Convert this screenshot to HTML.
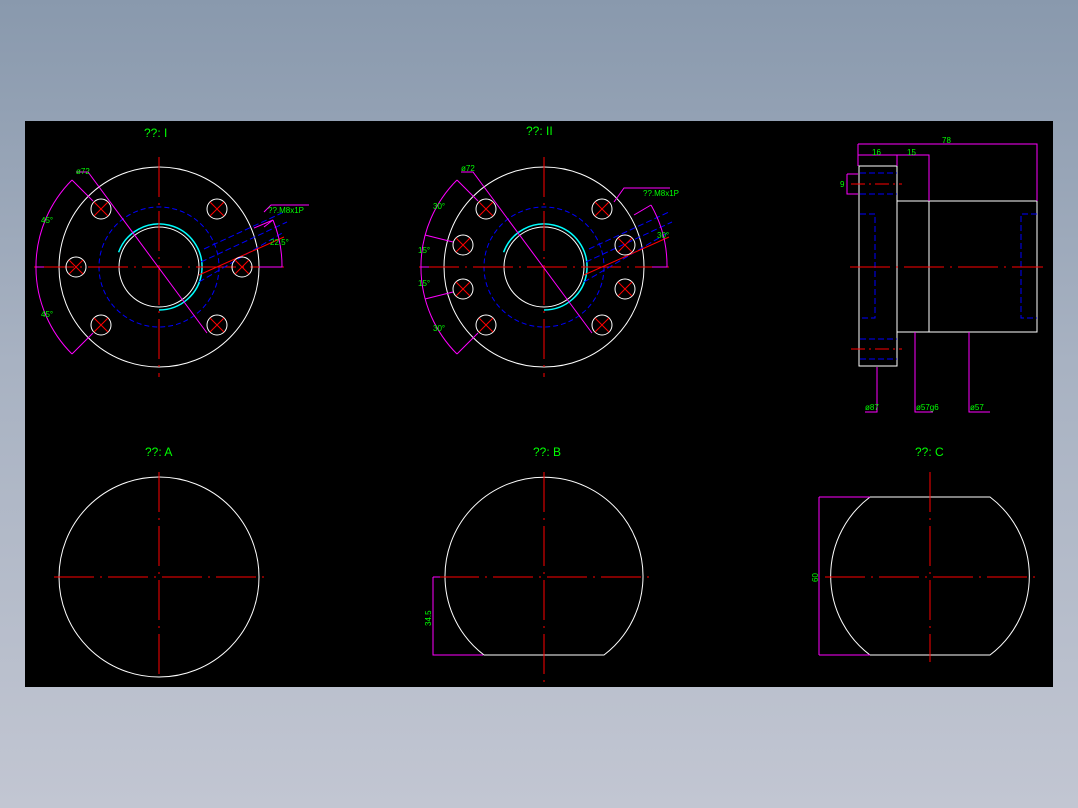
<!DOCTYPE html>
<html><head><meta charset="utf-8"><style>
html,body{margin:0;padding:0}
body{width:1078px;height:808px;background:linear-gradient(#8999ad,#a8b2c2 45%,#c2c6d2);overflow:hidden;position:relative}
svg{position:absolute;left:0;top:0}
text{font-family:"Liberation Sans",sans-serif;fill:#00ff00;font-size:8px}
.t{font-size:12px}
</style></head><body>
<svg width="1078" height="808" viewBox="0 0 1078 808" fill="none" stroke-width="1">
<rect x="25" y="121" width="1028" height="566" fill="#000"/>
<defs>
<g id="hole"><circle r="10" stroke="#fff"/><path d="M-7,-7L7,7M7,-7L-7,7" stroke="#f00"/></g>
<g id="flange">
<circle r="100" stroke="#fff"/>
<circle r="60" stroke="#00f" stroke-dasharray="5,3"/>
<circle r="40" stroke="#fff"/>
<path d="M-40.4,-14.7A43,43 0 1 1 0,43" stroke="#0ff" stroke-width="1.5"/>
<path d="M-125,0H125M0,-110V110" stroke="#f00" stroke-dasharray="40,6,2,6"/>
<path d="M45,-18L125,-55M42,-5L128,-45M40,15L125,-35" stroke="#00f" stroke-dasharray="6,3"/>
<path d="M40,8L125,-30" stroke="#f00"/>
</g>
</defs>
<!-- View I -->
<g transform="translate(159,267)">
<use href="#flange"/>
<use href="#hole" x="-83" y="0"/><use href="#hole" x="83" y="0"/>
<use href="#hole" x="-58" y="-58"/><use href="#hole" x="58" y="-58"/>
<use href="#hole" x="-58" y="58"/><use href="#hole" x="58" y="58"/>
<path d="M-66,-66L-87,-87M-87,-87A123,123 0 0 0 -87,87M-87,87L-66,66M-123,0H-115" stroke="#f0f"/>
<path d="M-83,-95H-71L48,66" stroke="#f0f"/>
<path d="M95,-39L114,-47M114,-47A123,123 0 0 1 123,0H100M114,-47L105,-40" stroke="#f0f"/>
<path d="M105,-55L112,-62H150" stroke="#f0f"/>
</g>
<text x="76" y="174">ø72</text>
<text x="41" y="223">45°</text>
<text x="41" y="317">45°</text>
<text x="268" y="213" font-size="7">??.M8x1P</text>
<text x="270" y="245">22.5°</text>
<text class="t" x="144" y="137">??: I</text>
<!-- View II -->
<g transform="translate(544,267)">
<use href="#flange"/>
<use href="#hole" x="-81" y="-22"/><use href="#hole" x="81" y="-22"/>
<use href="#hole" x="-81" y="22"/><use href="#hole" x="81" y="22"/>
<use href="#hole" x="-58" y="-58"/><use href="#hole" x="58" y="-58"/>
<use href="#hole" x="-58" y="58"/><use href="#hole" x="58" y="58"/>
<path d="M-66,-66L-87,-87M-87,-87A123,123 0 0 0 -87,87M-87,87L-66,66M-123,0H-115M-119,-32L-91,-25M-119,32L-91,25" stroke="#f0f"/>
<path d="M-83,-95H-71L48,66" stroke="#f0f"/>
<path d="M90,-52L107,-62M107,-62A123,123 0 0 1 123,0H108" stroke="#f0f"/>
<path d="M70,-65L80,-79H126" stroke="#f0f"/>
</g>
<text x="461" y="171">ø72</text>
<text x="433" y="209">30°</text>
<text x="418" y="253">15°</text>
<text x="418" y="286">15°</text>
<text x="433" y="331">30°</text>
<text x="643" y="196" font-size="7">??.M8x1P</text>
<text x="657" y="238">30°</text>
<text class="t" x="526" y="135">??: II</text>
<!-- Side view -->
<g>
<path d="M859,166H897V366H859Z" stroke="#fff"/>
<path d="M897,201H1037V332H897ZM929,201V332M897,201V332" stroke="#fff"/>
<path d="M860,173H897M860,194H897M860,339H897M860,359H897" stroke="#00f" stroke-dasharray="6,3"/>
<path d="M860,214H875V318H860M1037,214H1021V318H1037" stroke="#00f" stroke-dasharray="6,3"/>
<path d="M850,267H1043" stroke="#f00" stroke-dasharray="40,6,2,6"/>
<path d="M851,184H902M851,349H902" stroke="#f00" stroke-dasharray="14,4,2,4"/>
<path d="M858,144H1037V201M858,144V166M858,155H929V201M897,155V166" stroke="#f0f"/>
<path d="M847,174H858M847,174V194H858" stroke="#f0f"/>
<path d="M877,367V412H865M915,332V412H933M969,332V412H990" stroke="#f0f"/>
</g>
<text x="942" y="143">78</text>
<text x="872" y="155">16</text>
<text x="907" y="155">15</text>
<text x="840" y="187">9</text>
<text x="865" y="410" font-size="7">ø87</text>
<text x="916" y="410" font-size="7">ø57g6</text>
<text x="970" y="410" font-size="7">ø57</text>
<!-- Bottom views -->
<circle cx="159" cy="577" r="100" stroke="#fff"/>
<path d="M54,577H264M159,472V680" stroke="#f00" stroke-dasharray="40,6,2,6"/>
<text class="t" x="145" y="456">??: A</text>
<path d="M484,655A99,99 0 1 1 604,655Z" stroke="#fff"/>
<path d="M439,577H649M544,472V682" stroke="#f00" stroke-dasharray="40,6,2,6"/>
<path d="M433,577V655H483M433,577H440" stroke="#f0f"/>
<text x="0" y="0" transform="translate(431,626) rotate(-90)">34.5</text>
<text class="t" x="533" y="456">??: B</text>
<path d="M870,497H990A99,99 0 0 1 990,655H870A99,99 0 0 1 870,497Z" stroke="#fff"/>
<path d="M825,577H1035M930,472V662" stroke="#f00" stroke-dasharray="40,6,2,6"/>
<path d="M819,497H870M819,655H870M819,497V655" stroke="#f0f"/>
<text x="0" y="0" transform="translate(818,582) rotate(-90)">60</text>
<text class="t" x="915" y="456">??: C</text>
</svg>
</body></html>
